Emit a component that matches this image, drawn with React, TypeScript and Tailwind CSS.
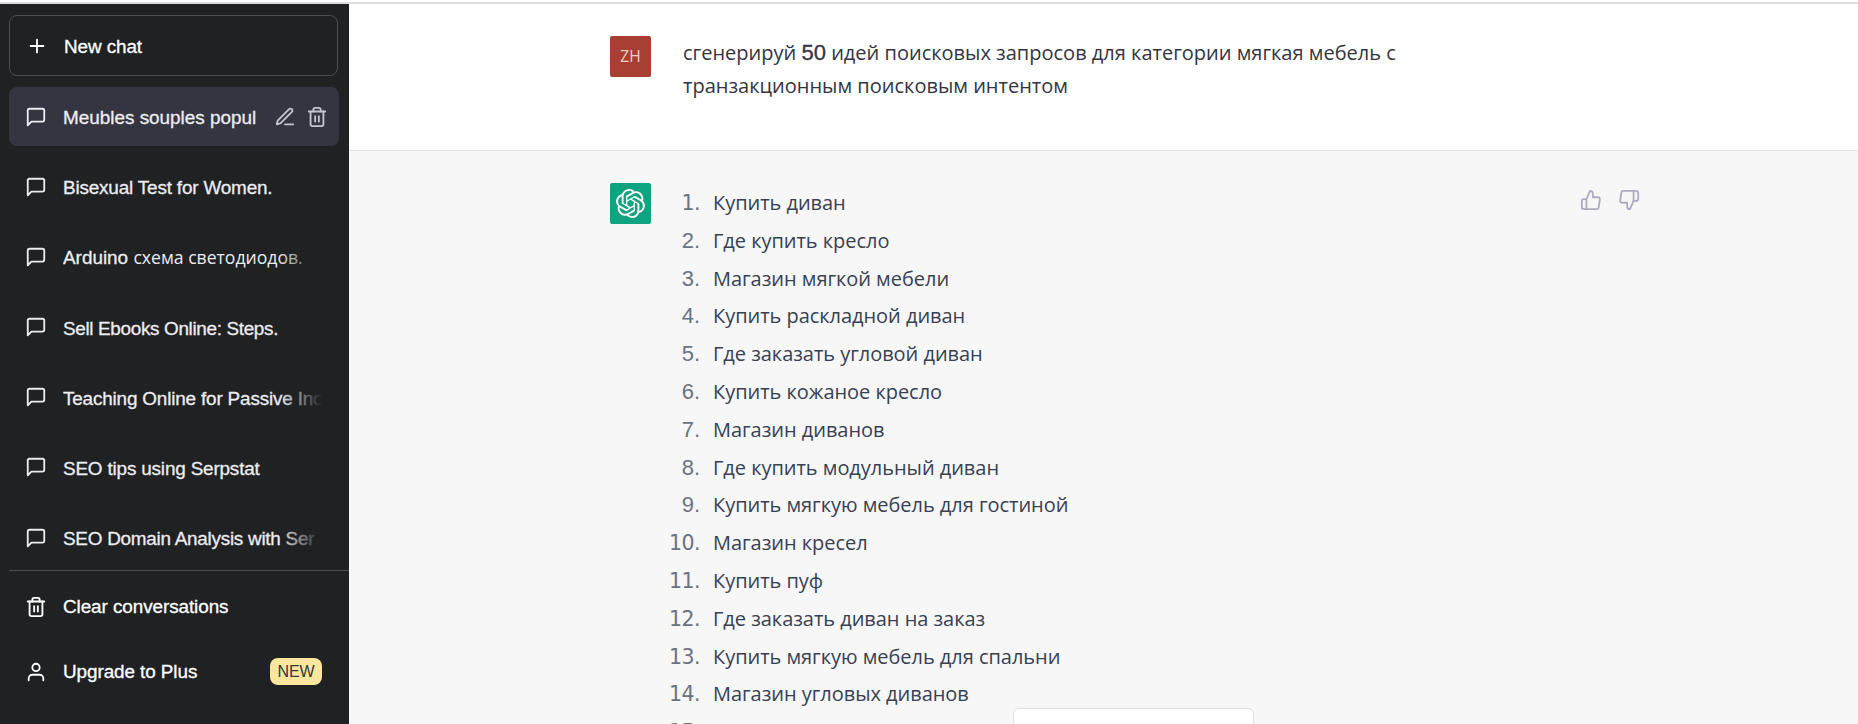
import { FiEdit3, FiMessageSquare, FiPlus, FiThumbsDown, FiThumbsUp, FiTrash2, FiUser } from "react-icons/fi";
import { SiOpenai } from "react-icons/si";
import clsx from "clsx";

const chats = [
    { title: "Meubles souples popul", active: true },
    { title: "Bisexual Test for Women.", tracking: "tracking-[-0.17px]" },
    { title: "Arduino ", cyrillic: "схема светодиодов." },
    { title: "Sell Ebooks Online: Steps.", tracking: "tracking-[-0.33px]" },
    { title: "Teaching Online for Passive Inc", tracking: "tracking-[-0.17px]" },
    { title: "SEO tips using Serpstat", tracking: "tracking-[-0.17px]" },
    { title: "SEO Domain Analysis with Ser", tracking: "tracking-[-0.25px]" },
];

const ideas = [
    "Купить диван",
    "Где купить кресло",
    "Магазин мягкой мебели",
    "Купить раскладной диван",
    "Где заказать угловой диван",
    "Купить кожаное кресло",
    "Магазин диванов",
    "Где купить модульный диван",
    "Купить мягкую мебель для гостиной",
    "Магазин кресел",
    "Купить пуф",
    "Где заказать диван на заказ",
    "Купить мягкую мебель для спальни",
    "Магазин угловых диванов",
    "Купить угловой диван",
];

function Sidebar() {
    return (
        <aside className="flex h-full w-[349px] shrink-0 flex-col bg-[#202123] pl-[9px] text-[18.9px] leading-[27px] text-white [-webkit-text-stroke:0.3px]">
            <button className="mt-[11px] mr-[11px] flex h-[61px] shrink-0 items-center gap-[16px] rounded-lg border border-[#4d4d4f] pl-[16px] tracking-[-0.1px]">
                <FiPlus className="size-[22px]" />
                <span className="pt-px">New chat</span>
            </button>

            <nav className="mt-[11px] mr-[10px] flex h-[483px] shrink-0 flex-col gap-[11.2px] overflow-hidden">
                {chats.map((chat) => (
                    <div
                        key={chat.title}
                        className={clsx(
                            "flex h-[59px] shrink-0 items-center rounded-lg pl-[16px] text-[#ececf1]",
                            chat.active && "bg-[#343541]"
                        )}
                    >
                        <FiMessageSquare className="size-[22px] shrink-0" />
                        <div
                            className={clsx(
                                "relative ml-[16px] min-w-0 flex-1 overflow-hidden pt-[2px] whitespace-nowrap",
                                chat.tracking
                            )}
                        >
                            {chat.title}
                            {chat.cyrillic && (
                                <span className="font-['Open_Sans',sans-serif] text-[17.6px] [-webkit-text-stroke:0]">
                                    {chat.cyrillic}
                                </span>
                            )}
                            {!chat.active && (
                                <div className="absolute inset-y-0 right-0 w-[43px] bg-linear-to-l from-[#202123] to-transparent" />
                            )}
                        </div>
                        {chat.active ? (
                            <div className="mr-[11px] flex shrink-0 gap-[10px] text-[#c5c5d2]">
                                <FiEdit3 className="size-[22px]" />
                                <FiTrash2 className="size-[22px]" />
                            </div>
                        ) : (
                            <div className="w-[17px] shrink-0" />
                        )}
                    </div>
                ))}
            </nav>

            <div className="border-t border-[#4d4d4f] pt-[6px] tracking-[-0.08px]">
                <div className="flex h-[59px] items-center gap-[16px] pl-[16px]">
                    <FiTrash2 className="size-[22px]" />
                    Clear conversations
                </div>
                <div className="mt-[6px] flex h-[59px] items-center gap-[16px] pr-[27px] pl-[16px]">
                    <FiUser className="size-[22px]" />
                    Upgrade to Plus
                    <span className="ml-auto flex h-[27px] w-[52px] items-center justify-center rounded-lg bg-[#fbe69e] text-[16px] text-[#343541] [-webkit-text-stroke:0]">
                        NEW
                    </span>
                </div>
            </div>
        </aside>
    );
}

function Chat() {
    return (
        <main className="relative flex min-w-0 flex-1 flex-col bg-[#f7f7f8] font-['Open_Sans',sans-serif] text-[20px]">
            <section className="flex h-[147px] shrink-0 border-b border-[#e3e3e4] bg-white pt-[32px] pl-[261px] text-[#343541]">
                <div className="flex size-[41px] shrink-0 items-center justify-center rounded-xs bg-[#a83f33] text-[15.5px] font-medium text-[#f5cfca]">
                    ZH
                </div>
                <p className="ml-[32px] w-[760px] leading-[33px]">
                    сгенерируй{" "}
                    <span className="font-['Liberation_Sans',sans-serif] text-[22px] [-webkit-text-stroke:0.3px]">50</span>{" "}
                    идей поисковых запросов для категории мягкая мебель с<br />
                    транзакционным поисковым интентом
                </p>
            </section>

            <section className="flex min-h-0 flex-1 overflow-hidden pl-[261px]">
                <div className="mt-[32px] flex size-[41px] shrink-0 items-center justify-center rounded-xs bg-[#10a37f] pr-px text-white">
                    <SiOpenai className="size-[29px]" />
                </div>
                <ol className="mt-[33px] ml-[8px] w-[820px] leading-[37.8px] tracking-[-0.04px] text-[#374151]">
                    {ideas.map((idea, i) => (
                        <li key={idea} className="flex h-[37.8px]">
                            <span
                                className={clsx(
                                    "mr-[13px] w-[41px] shrink-0 text-right text-[#6b7280]",
                                    i === 0 || i > 8
                                        ? "pt-px font-['DejaVu_Sans',sans-serif] text-[20.5px] tracking-[-0.5px]"
                                        : "font-['Liberation_Sans',sans-serif] text-[22px]"
                                )}
                            >
                                {i + 1}.
                            </span>
                            {idea}
                        </li>
                    ))}
                </ol>
                <div className="mt-[38px] ml-[101px] flex h-[22px] shrink-0 gap-[16px] text-[#acacbe]">
                    <FiThumbsUp className="size-[22px]" />
                    <FiThumbsDown className="size-[22px]" />
                </div>
            </section>

            {/* Regenerate button, cut off by the lower edge */}
            <div className="absolute top-[704px] left-[664px] h-[54px] w-[241px] rounded-md border border-[#dfdfe4] bg-white" />
        </main>
    );
}

export default function App() {
    return (
        <div className="flex h-[724px] w-[1858px] flex-col overflow-hidden bg-white font-['Liberation_Sans',Arial,sans-serif]">
            <div className="h-[4px] shrink-0 border-b-2 border-[#dcdcde] bg-white" />
            <div className="flex min-h-0 flex-1">
                <Sidebar />
                <Chat />
            </div>
        </div>
    );
}
